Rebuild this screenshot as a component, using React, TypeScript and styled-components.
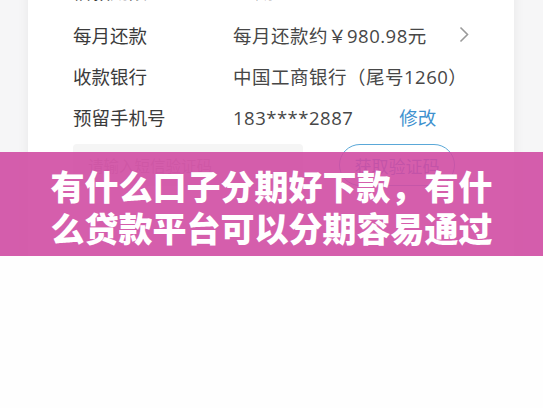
import styled, { createGlobalStyle } from "styled-components";

const GlobalStyle = createGlobalStyle`
  html, body {
    margin: 0;
    padding: 0;
    background: #fefefe;
  }
  body {
    font-family: "Noto Sans CJK SC", "Noto Sans", sans-serif;
  }
`;

const Page = styled.div`
  width: 543px;
  height: 408px;
  overflow: hidden;
  background: #fefefe;
`;

const Screen = styled.section`
  position: relative;
  height: 256px;
  overflow: hidden;
  background: #f6f6f7;
  padding: 0 29px 0 28px;
`;

const Card = styled.div`
  margin-top: -33px;
  background: #ffffff;
  box-shadow: 0 0 12px rgba(0, 0, 0, 0.06);
  padding: 0 45px;
  height: 330px;
`;

// first row is the one cut off by the top edge of the screenshot
const Row = styled.div<{ $tall?: boolean }>`
  display: flex;
  align-items: center;
  height: ${({ $tall }) => ($tall ? "47px" : "41px")};
  font-size: 18.5px;
`;

const Label = styled.span`
  width: 160px;
  flex: none;
  color: #3b3b3b;
`;

const Value = styled.span`
  flex: 1;
  color: #474747;
  white-space: nowrap;
  font-family: "Open Sans", "Noto Sans CJK SC", sans-serif;
  letter-spacing: 0.5px;
`;

const Chevron = styled.svg`
  width: 10px;
  height: 17px;
  flex: none;
`;

const EditLink = styled.span`
  margin-left: 46px;
  color: #3f92cf;
  letter-spacing: 0;
`;

const CodeRow = styled.div`
  display: flex;
  align-items: center;
  gap: 36px;
  margin-top: 7px;
`;

const CodeInput = styled.div`
  width: 230px;
  height: 42px;
  border-radius: 4px;
  background: #f5f5f5;
  display: flex;
  align-items: center;
  padding-left: 15px;
  box-sizing: border-box;
  font-size: 15.5px;
  color: #b8b8b8;
`;

const CodeButton = styled.div`
  width: 116px;
  height: 42px;
  box-sizing: border-box;
  border: 1.5px solid #5aa8d8;
  border-radius: 21px;
  display: flex;
  align-items: center;
  justify-content: center;
  font-size: 17px;
  color: #3f92cf;
`;

const Banner = styled.div`
  position: absolute;
  left: 0;
  right: 0;
  top: 152px;
  height: 104px;
  background: rgba(208, 76, 163, 0.9);
  display: flex;
  align-items: center;
  justify-content: center;
  padding-top: 6px;
  box-sizing: border-box;
`;

const Title = styled.h1`
  margin: 0;
  width: 450px;
  text-align: center;
  color: #ffffff;
  font-size: 34px;
  line-height: 42px;
  font-weight: 900;
`;

const rows = [
  { label: "借款期限", value: "12期" },
  { label: "每月还款", value: "每月还款约￥980.98元", arrow: true },
  { label: "收款银行", value: "中国工商银行（尾号1260）" },
];

export default function App() {
  return (
    <Page>
      <GlobalStyle />
      <Screen>
        <Card>
          {rows.map((r, i) => (
            <Row key={r.label} $tall={i === 0}>
              <Label>{r.label}</Label>
              <Value>{r.value}</Value>
              {r.arrow && (
                <Chevron viewBox="0 0 10 17">
                  <path d="M1.5 1.5 L8.5 8.5 L1.5 15.5" fill="none" stroke="#9a9a9a" strokeWidth="1.6" />
                </Chevron>
              )}
            </Row>
          ))}
          <Row>
            <Label>预留手机号</Label>
            <Value>
              183****2887
              <EditLink>修改</EditLink>
            </Value>
          </Row>
          <CodeRow>
            <CodeInput>请输入短信验证码</CodeInput>
            <CodeButton>获取验证码</CodeButton>
          </CodeRow>
        </Card>
        <Banner>
          <Title>有什么口子分期好下款，有什么贷款平台可以分期容易通过</Title>
        </Banner>
      </Screen>
    </Page>
  );
}
